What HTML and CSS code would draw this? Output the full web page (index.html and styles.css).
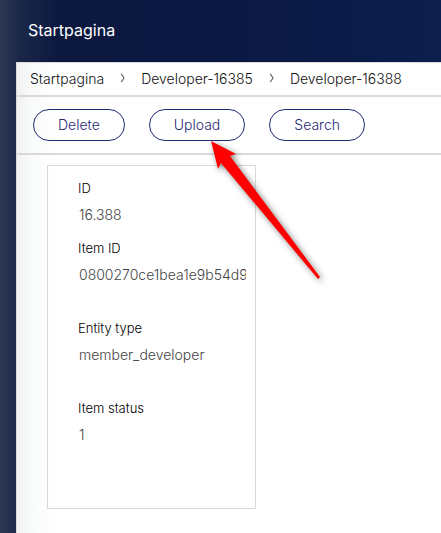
FILE: index.html
```
<!DOCTYPE html>
<html lang="nl">
<head>
<meta charset="utf-8">
<title>Startpagina</title>
<link rel="stylesheet" href="styles.css">
</head>
<body>
<header class="topbar"><h1 class="title">Startpagina</h1></header>
<main class="panel">
  <nav class="crumbs">
    <a href="#">Startpagina</a>
    <svg class="chevron" viewBox="0 0 5 10"><path d="M1 1Q2 1.500 4 5Q2 8.500 1 9"/></svg>
    <a href="#">Developer-16385</a>
    <svg class="chevron" viewBox="0 0 5 10"><path d="M1 1Q2 1.500 4 5Q2 8.500 1 9"/></svg>
    <a href="#">Developer-16388</a>
  </nav>
  <div class="toolbar">
    <button type="button">Delete</button>
    <div class="target">
      <button type="button">Upload</button>
      <svg class="arrow" viewBox="0 0 120 150"><path d="M2 2L27 15L21 17L111 138L109 140L12 24L9 30Z"/></svg>
    </div>
    <button type="button">Search</button>
  </div>
  <form class="card">
    <div class="field short"><label for="id">ID</label><input id="id" value="16.388" readonly></div>
    <div class="field"><label for="item">Item ID</label><input id="item" value="0800270ce1bea1e9b54d9" readonly></div>
    <div class="field"><label for="type">Entity type</label><input id="type" value="member_developer" readonly></div>
    <div class="field"><label for="status">Item status</label><input id="status" value="1" readonly></div>
  </form>
</main>
</body>
</html>
```
FILE: styles.css
```
* { box-sizing: border-box; }
body {
  margin: 0;
  min-height: 100vh;
  padding-left: 16px;
  display: flex;
  flex-direction: column;
  overflow-x: hidden;
  font-family: Inter, "Liberation Sans", sans-serif;
  font-size: 14px;
  font-weight: 300;
  color: #111;
  background: linear-gradient(to right, #2c3854 0, #1b2748 20px, #0c1840 60px, #0b1842 50%, #0c1e4d 100%);
}
.topbar { height: 62px; padding: 20px 12px; }
.title { margin: 0; font-size: 16px; line-height: 20px; font-weight: 400; color: #fff; }
.panel {
  flex: 1;
  border: solid #d9d9d9;
  border-width: 1px 0 0 1px;
  background: linear-gradient(to right, #f1f3f2 0, #fafcfb 18px, #fff 45px);
}
.crumbs {
  height: 34px;
  padding: 0 0 2px 13px;
  display: flex;
  align-items: center;
  gap: 16px;
  border-bottom: 2px solid #d9d9d9;
}
.crumbs a { color: inherit; text-decoration: none; white-space: nowrap; }
.chevron { width: 5px; height: 10px; flex: none; fill: none; stroke: #666; stroke-width: 1.2; }
.toolbar {
  height: 58px;
  padding: 12px 16px;
  display: flex;
  gap: 24px;
  border-bottom: 2px solid #d9d9d9;
}
.toolbar button {
  height: 32px;
  padding: 0 24px 2px;
  border: 1px solid #1f2a75;
  border-radius: 16px;
  background: transparent;
  font: inherit;
  color: #1f2a75;
}
.target { position: relative; }
.arrow {
  position: absolute;
  left: 60px;
  top: 30px;
  width: 120px;
  height: 150px;
  fill: #f00;
  filter: drop-shadow(2px 2px 3px rgba(0, 0, 0, 0.5));
  pointer-events: none;
}
.card {
  width: 209px;
  margin: 10px 30px 24px;
  padding: 12px 9px 30px 30px;
  border: 1px solid #d9d9d9;
}
.field { height: 80px; }
.field.short { height: 60px; }
.field label { display: block; font-size: 13px; line-height: 20px; color: #000; }
.field input {
  display: block;
  width: 100%;
  height: 20px;
  margin-top: 6px;
  padding: 0 0 0 1px;
  border: 0;
  background: transparent;
  font: inherit;
  color: #444;
}
```
